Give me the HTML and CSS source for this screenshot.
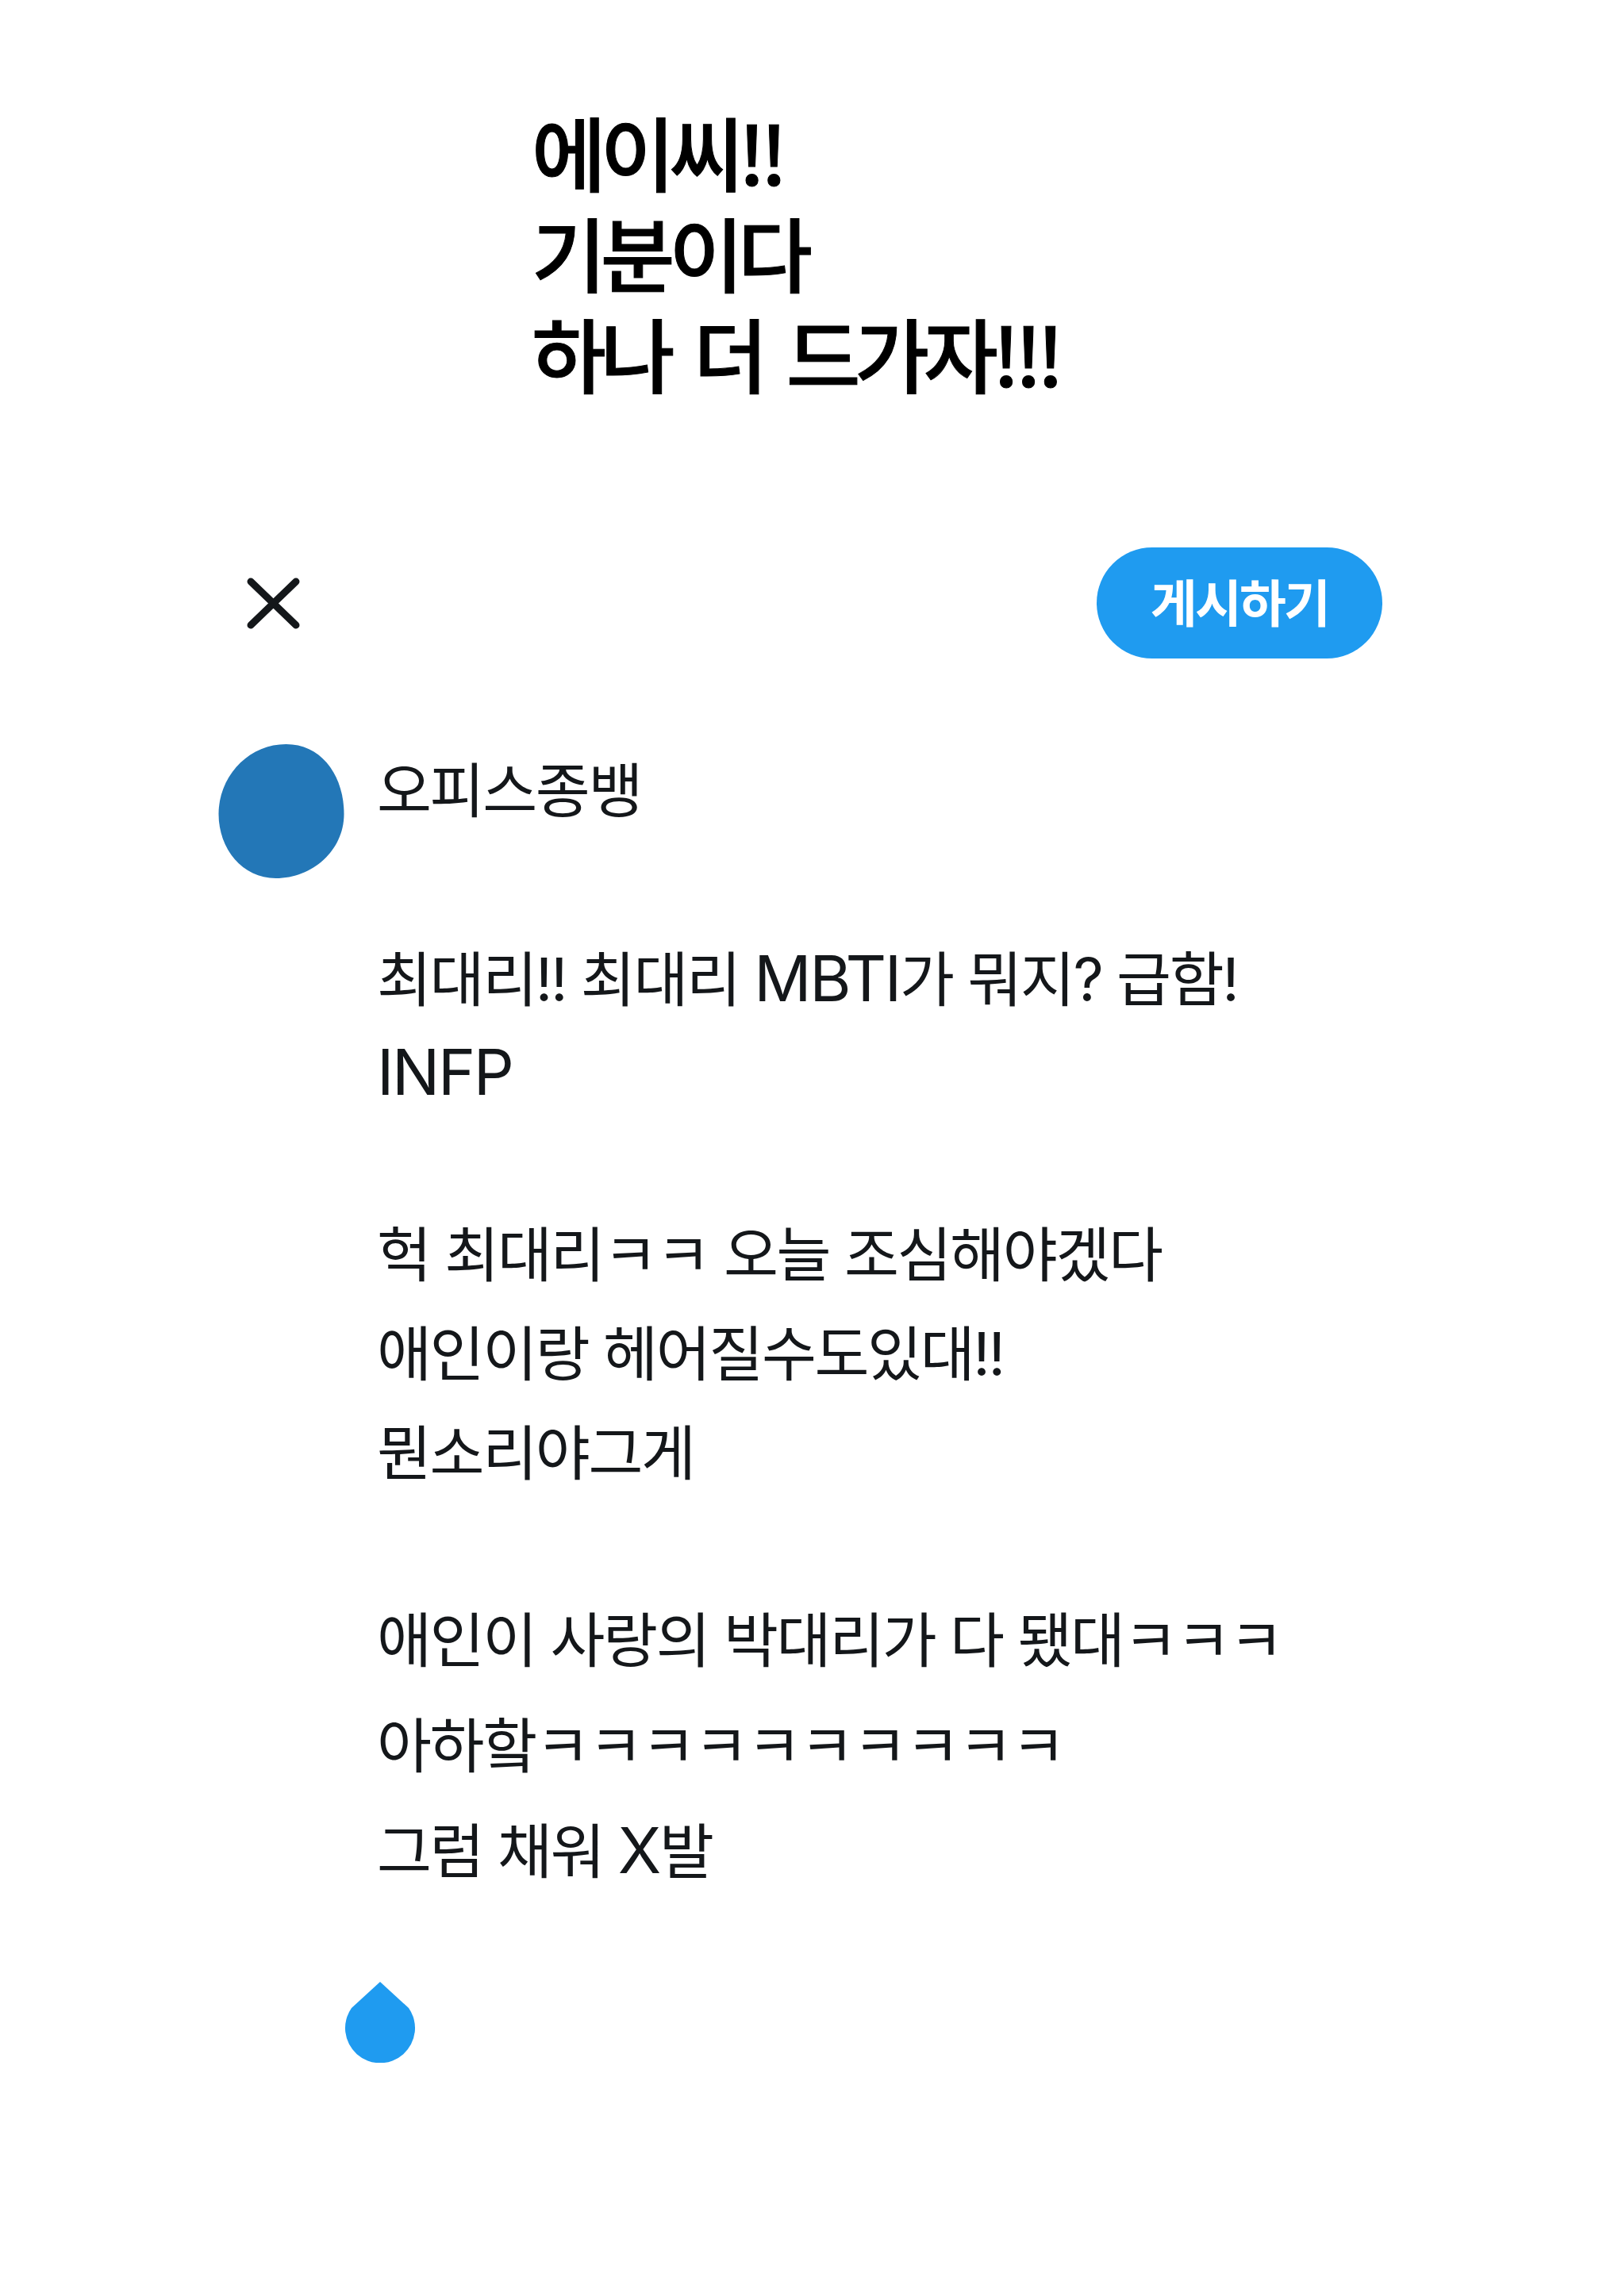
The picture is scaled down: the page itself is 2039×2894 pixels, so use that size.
FILE: index.html
```html
<!DOCTYPE html>
<html lang="ko">
<head>
<meta charset="utf-8">
<title>에이씨!!</title>
<link rel="stylesheet" href="styles.css">
</head>
<body>
<main class="page">
  <h1 class="headline">에이씨!!<br>기분이다<br>하나 더 드가자!!!</h1>
  <section class="composer">
    <header class="topbar">
      <svg class="close" viewBox="0 0 68 68" aria-label="닫기"><path d="M6 7 L63 62 M63 7 L6 62"/></svg>
      <div class="post">게시하기</div>
    </header>
    <div class="tweet">
      <svg class="avatar" viewBox="0 0 158 170"><path d="M85 0 C130 0 158 40 158 88 C158 134 118 169 72 169 C30 169 0 132 0 88 C0 40 38 0 85 0 Z"/></svg>
      <div class="lines">
        <p class="name">오피스종뱅</p>
        <p class="l1">최대리!! 최대리 <span class="lat">MBTI</span>가 뭐지? 급함!</p>
        <p class="l2"><span class="lat">INFP</span></p>
        <p class="l3">헉 최대리ㅋㅋ 오늘 조심해야겠다</p>
        <p class="l4">애인이랑 헤어질수도있대!!</p>
        <p class="l4">뭔소리야그게</p>
        <p class="l5">애인이 사랑의 박대리가 다 됐대ㅋㅋㅋ</p>
        <p class="l6">아하핰ㅋㅋㅋㅋㅋㅋㅋㅋㅋㅋ</p>
        <p class="l6">그럼 채워 <span class="lat">X</span>발</p>
      </div>
    </div>
    <svg class="drop" viewBox="0 0 88 102"><path d="M44 0 L80 33 A44 44 0 1 1 8 33 Z"/></svg>
  </section>
</main>
</body>
</html>
```
FILE: styles.css
```css
html, body { margin: 0; padding: 0; background: #fff; }
.page {
  width: 2039px;
  height: 2894px;
  padding-top: 126px;
  box-sizing: border-box;
  font-family: "Noto Sans CJK KR", "Noto Sans", sans-serif;
  overflow: hidden;
}
.headline {
  margin: 0 0 0 670px;
  font-size: 102px;
  line-height: 127px;
  font-weight: 500;
  letter-spacing: -7.2px;
  word-spacing: 9px;
  -webkit-text-stroke: 1px #000;
  color: #000;
}
.composer { padding: 183px 297px 0 275px; }
.topbar {
  display: flex;
  justify-content: space-between;
  align-items: center;
  padding-left: 35px;
}
.close { width: 68px; height: 68px; }
.close path { stroke: #14171a; stroke-width: 9; stroke-linecap: round; fill: none; }
.post {
  width: 360px;
  height: 140px;
  box-sizing: border-box;
  padding-bottom: 8px;
  border-radius: 70px;
  background: #1f9bf0;
  color: #fff;
  font-size: 64px;
  font-weight: 700;
  letter-spacing: -2.8px;
  display: flex;
  align-items: center;
  justify-content: center;
}
.tweet {
  display: flex;
  gap: 41px;
  margin-top: 108px;
  align-items: flex-start;
}
.avatar { width: 159px; height: 170px; flex: none; }
.avatar path { fill: #2377b7; }
.lines {
  color: #14171a;
  font-family: Inter, "Noto Sans CJK KR", sans-serif;
  font-size: 75px;
  letter-spacing: -2.4px;
  line-height: 100px;
}
.lat { font-size: 80px; line-height: 1; }
.lines p { margin: 0; white-space: nowrap; }
.name { margin-top: 9px !important; }
.l1 { margin-top: 138px !important; }
.l2 { margin-top: 18px !important; }
.l3 { margin-top: 129px !important; }
.l4 { margin-top: 25px !important; }
.l5 { margin-top: 136px !important; }
.l6 { margin-top: 33px !important; }
.drop { display: block; width: 88px; height: 102px; margin: 114px 0 0 160px; }
.drop path { fill: #1f9bf0; }
```
